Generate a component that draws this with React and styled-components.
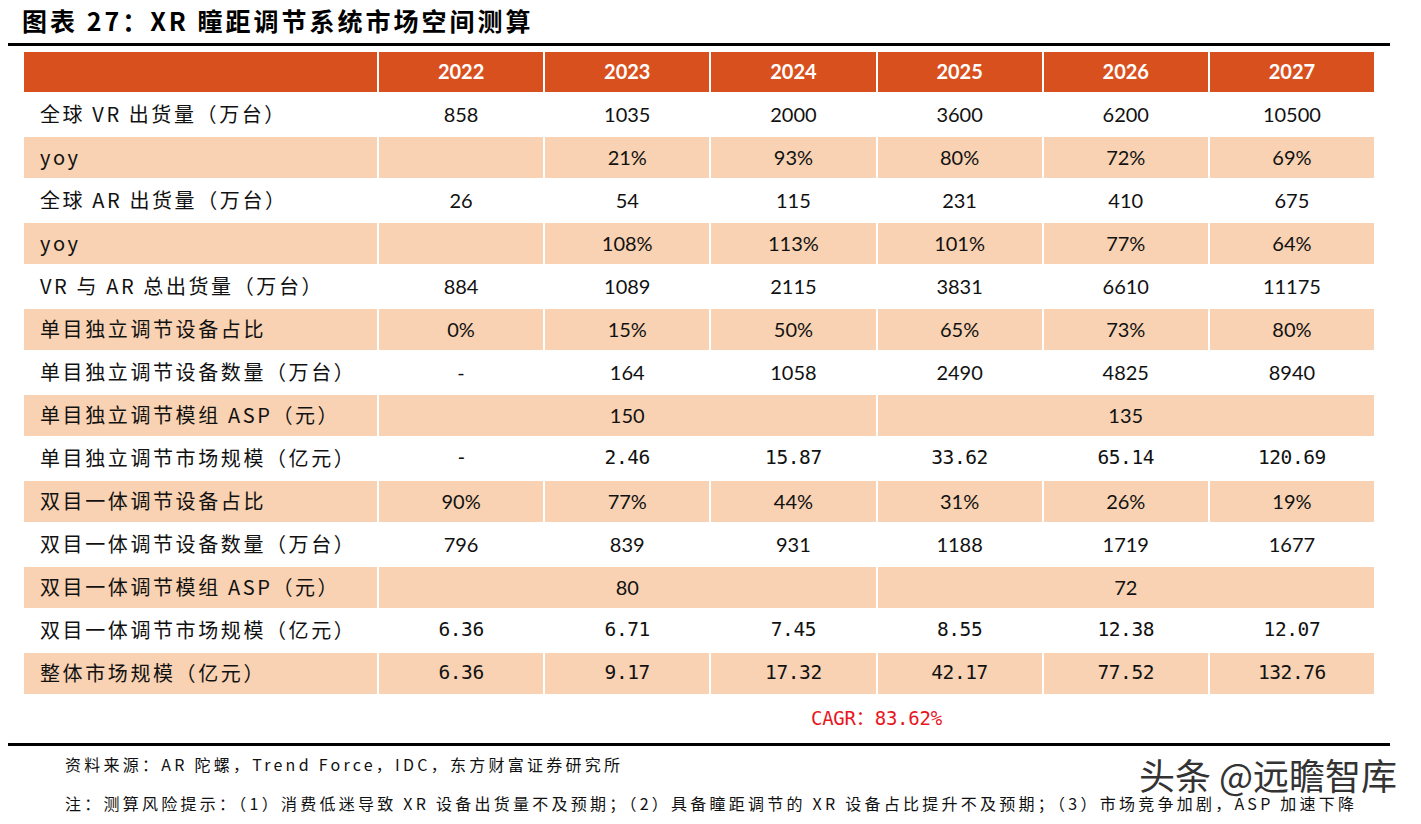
import React from "react";
import styled, { createGlobalStyle } from "styled-components";

const GlobalStyle = createGlobalStyle`
  html, body { margin: 0; padding: 0; background: #fff; }
  body { font-family: "Noto Sans CJK SC", "Noto Sans", sans-serif; color: #000; }
`;

const CJK = `"Noto Sans CJK SC", "Noto Sans", sans-serif`;
const SANS = `Lato, "Noto Sans CJK SC", sans-serif`;
const MONO = `"DejaVu Sans Mono", "Noto Sans CJK SC", monospace`;

const Page = styled.div`
  position: relative;
  width: 1421px;
  height: 824px;
  padding-left: 8px;
  box-sizing: border-box;
  overflow: hidden;
`;

const Frame = styled.div`
  width: 1382px;
  display: flex;
  flex-direction: column;
`;

const Title = styled.h1`
  margin: 0;
  height: 43px;
  padding: 0 0 3px 14px;
  box-sizing: border-box;
  display: flex;
  align-items: center;
  font-family: ${CJK};
  font-size: 25px;
  font-weight: 700;
  letter-spacing: 3px;
  white-space: nowrap;
`;

const Rule = styled.div`
  height: 3px;
  background: #000;
`;

const TableArea = styled.div`
  padding: 6px 16px 0 16px;
`;

const Grid = styled.div`
  display: grid;
  grid-template-columns: 353px repeat(6, 1fr);
  grid-auto-rows: 41px;
  grid-template-rows: 40px;
  gap: 2px;
  background: #fff;
`;

const Cell = styled.div`
  display: flex;
  align-items: center;
  justify-content: ${(p) => (p.$label ? "flex-start" : "center")};
  padding-left: ${(p) => (p.$label ? "16px" : "0")};
  padding-bottom: 2px;
  box-sizing: border-box;
  background: ${(p) =>
    p.$tone === "head" ? "#D9501F" : p.$tone === "peach" ? "#F8D2B2" : "#fff"};
  color: ${(p) => (p.$tone === "head" ? "#fff" : "#111")};
  font-family: ${(p) => (p.$label ? CJK : p.$mono ? MONO : SANS)};
  font-size: ${(p) => (p.$label ? "20px" : p.$mono ? "19.5px" : "20px")};
  font-weight: ${(p) => (p.$tone === "head" ? 700 : 400)};
  letter-spacing: ${(p) => (p.$label ? "2.6px" : p.$mono ? "-0.4px" : "0")};
  grid-column: ${(p) => (p.$span ? `span ${p.$span}` : "auto")};
  white-space: nowrap;
`;

const CagrRow = styled.div`
  display: grid;
  grid-template-columns: 353px repeat(6, 1fr);
  gap: 2px;
  height: 49px;
  padding: 0 16px 4px;
  box-sizing: border-box;
  align-items: center;
`;

const Cagr = styled.div`
  grid-column: 4 / 6;
  text-align: center;
  color: #E8161E;
  font-family: ${MONO};
  font-size: 19px;
  letter-spacing: -0.2px;
`;

const Notes = styled.div`
  display: flex;
  flex-direction: column;
  gap: 17px;
  padding: 7px 0 0 57px;
`;

const Note = styled.div`
  font-family: ${CJK};
  font-size: 16px;
  line-height: 22px;
  letter-spacing: 3.25px;
  color: #111;
  white-space: nowrap;
`;

const Watermark = styled.div`
  position: absolute;
  right: 24px;
  top: 748px;
  font-family: ${CJK};
  font-size: 36px;
  font-weight: 400;
  color: #333;
  text-shadow: 1px 0 0 #fff, -1px 0 0 #fff, 0 1px 0 #fff, 0 -1px 0 #fff, 1px 1px 1px #fff, -1px -1px 1px #fff;
  white-space: nowrap;
`;

const years = ["2022", "2023", "2024", "2025", "2026", "2027"];

const rows = [
  { label: "全球 VR 出货量（万台）", vals: ["858", "1035", "2000", "3600", "6200", "10500"] },
  { label: "yoy", vals: ["", "21%", "93%", "80%", "72%", "69%"] },
  { label: "全球 AR 出货量（万台）", vals: ["26", "54", "115", "231", "410", "675"] },
  { label: "yoy", vals: ["", "108%", "113%", "101%", "77%", "64%"] },
  { label: "VR 与 AR 总出货量（万台）", vals: ["884", "1089", "2115", "3831", "6610", "11175"] },
  { label: "单目独立调节设备占比", vals: ["0%", "15%", "50%", "65%", "73%", "80%"] },
  { label: "单目独立调节设备数量（万台）", vals: ["-", "164", "1058", "2490", "4825", "8940"] },
  { label: "单目独立调节模组 ASP（元）", merged: ["150", "135"] },
  { label: "单目独立调节市场规模（亿元）", mono: true, vals: ["-", "2.46", "15.87", "33.62", "65.14", "120.69"] },
  { label: "双目一体调节设备占比", vals: ["90%", "77%", "44%", "31%", "26%", "19%"] },
  { label: "双目一体调节设备数量（万台）", vals: ["796", "839", "931", "1188", "1719", "1677"] },
  { label: "双目一体调节模组 ASP（元）", merged: ["80", "72"] },
  { label: "双目一体调节市场规模（亿元）", mono: true, vals: ["6.36", "6.71", "7.45", "8.55", "12.38", "12.07"] },
  { label: "整体市场规模（亿元）", mono: true, vals: ["6.36", "9.17", "17.32", "42.17", "77.52", "132.76"] },
];

export default function App() {
  return (
    <>
      <GlobalStyle />
      <Page>
        <Frame>
          <Title>图表 27：XR 瞳距调节系统市场空间测算</Title>
          <Rule />
          <TableArea>
            <Grid>
              <Cell $tone="head" />
              {years.map((y) => (
                <Cell key={y} $tone="head">{y}</Cell>
              ))}
              {rows.map((r, i) => {
                const tone = i % 2 === 1 ? "peach" : "white";
                return (
                  <React.Fragment key={i}>
                    <Cell $label $tone={tone}>{r.label}</Cell>
                    {r.merged
                      ? r.merged.map((v, j) => (
                          <Cell key={j} $tone={tone} $span={3}>{v}</Cell>
                        ))
                      : r.vals.map((v, j) => (
                          <Cell key={j} $tone={tone} $mono={r.mono}>{v}</Cell>
                        ))}
                  </React.Fragment>
                );
              })}
            </Grid>
          </TableArea>
          <CagrRow>
            <Cagr>CAGR：83.62%</Cagr>
          </CagrRow>
          <Rule />
          <Notes>
            <Note>资料来源：AR 陀螺，Trend Force，IDC，东方财富证券研究所</Note>
            <Note>注：测算风险提示：（1）消费低迷导致 XR 设备出货量不及预期；（2）具备瞳距调节的 XR 设备占比提升不及预期；（3）市场竞争加剧，ASP 加速下降</Note>
          </Notes>
        </Frame>
        <Watermark>头条 @远瞻智库</Watermark>
      </Page>
    </>
  );
}
